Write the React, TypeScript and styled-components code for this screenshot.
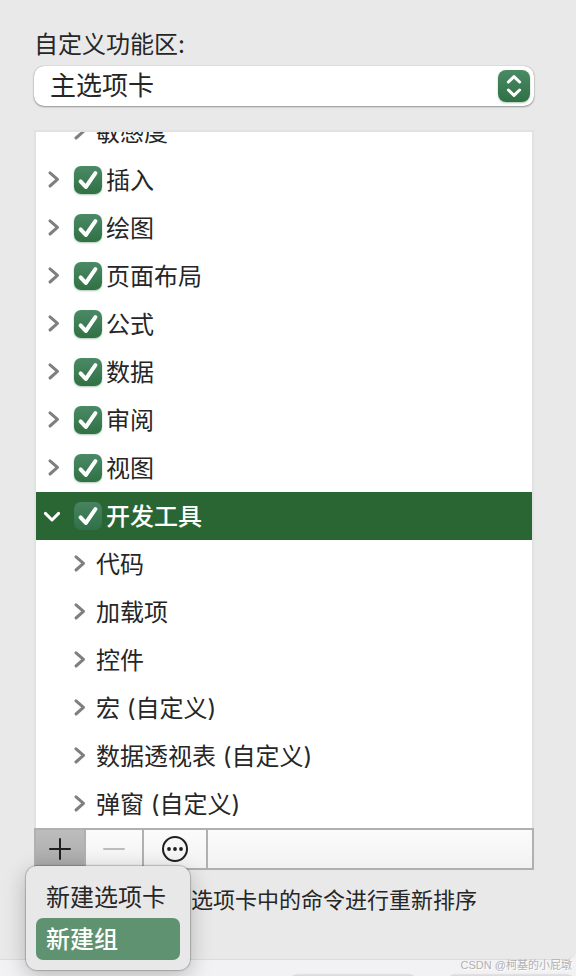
import React from "react";
import styled, { createGlobalStyle } from "styled-components";

const GlobalStyle = createGlobalStyle`
  *, *::before, *::after { box-sizing: border-box; }
  body { margin: 0; background: #f2f2f4; }
  body, button, select, input {
    font-family: Inter, "Noto Sans CJK SC", sans-serif;
    color: #262626;
  }
`;

const green = "linear-gradient(#4a8b66, #2f7044)";

const Page = styled.div`
  position: relative;
  display: flex;
  flex-direction: column;
  height: 100vh;
  overflow: hidden;
`;

const Panel = styled.main`
  flex: 1;
  min-height: 0;
  display: flex;
  flex-direction: column;
  padding: 29px 42px 0 34px;
  background: #e9e9e9;
  border-bottom: 1px solid #dcdcdc;
  border-bottom-right-radius: 10px;
`;

const FieldLabel = styled.label`
  font-size: 24px;
  line-height: 32px;
`;

const SelectBox = styled.div`
  display: grid;
  align-items: center;
  margin: 5px 0 24px;
  > * { grid-area: 1 / 1; }
`;

const Select = styled.select`
  appearance: none;
  width: 100%;
  height: 40px;
  padding: 0 48px 0 16px;
  border: 0;
  border-radius: 10px;
  background: #fff;
  font-size: 26px;
  line-height: 40px;
  box-shadow: 0 0 1px rgba(0, 0, 0, 0.4), 0 1px 2px rgba(0, 0, 0, 0.35);
`;

const Stepper = styled.span`
  justify-self: end;
  display: flex;
  width: 32px;
  height: 32px;
  margin-right: 4px;
  border-radius: 8px;
  background: ${green};
  box-shadow: 0 1px 2px rgba(47, 112, 68, 0.4);
  pointer-events: none;
`;

const Tree = styled.ul`
  flex: 1;
  min-height: 0;
  display: flex;
  flex-direction: column;
  justify-content: flex-end;
  overflow: hidden;
  margin: 0;
  padding: 0;
  list-style: none;
  background: #fff;
  border: 2px solid #e2e2e2;
  border-bottom: 0;
`;

const Row = styled.li<{ $nested?: boolean; $selected?: boolean }>`
  flex: none;
  display: flex;
  align-items: center;
  height: 48px;
  padding-left: ${(p) => (p.$nested ? 32 : 6)}px;
  font-size: 24px;
  line-height: 32px;
  font-weight: ${(p) => (p.$selected ? 500 : 400)};
  color: ${(p) => (p.$selected ? "#fff" : "#262626")};
  background: ${(p) => (p.$selected ? "#2a6534" : "transparent")};
`;

const Disclosure = styled.button<{ $selected?: boolean }>`
  display: flex;
  padding: 0;
  border: 0;
  background: none;
  color: ${(p) => (p.$selected ? "#fff" : "#7f7f7f")};
`;

const RowText = styled.span`
  padding-top: 2px;
`;

const NestedText = styled(RowText)`
  margin-left: 8px;
`;

const CheckLabel = styled.label`
  display: flex;
  align-items: center;
  gap: 4px;
  margin-left: 12px;
`;

const CheckBox = styled.span`
  display: grid;
  > * { grid-area: 1 / 1; }
  svg { pointer-events: none; visibility: hidden; }
  input:checked + svg { visibility: visible; }
`;

const CheckInput = styled.input<{ $selected?: boolean }>`
  appearance: none;
  width: 28px;
  height: 28px;
  margin: 0;
  border-radius: 7px;
  background: ${(p) => (p.$selected ? "linear-gradient(#47845f, #2f7148)" : green)};
  box-shadow: ${(p) => (p.$selected ? "none" : "0 1px 2px rgba(47, 112, 68, 0.4)")};
`;

const Toolbar = styled.div`
  display: flex;
  height: 42px;
  border: 2px solid #b0b0b0;
  background: linear-gradient(#fbfbfb, #f2f2f2);
`;

const Tool = styled.div<{ $width: number }>`
  position: relative;
  width: ${(p) => p.$width}px;
  border-right: 2px solid #b0b0b0;
`;

const ToolButton = styled.button<{ $pressed?: boolean }>`
  display: flex;
  align-items: center;
  justify-content: center;
  width: 100%;
  height: 100%;
  padding: 0;
  border: 0;
  background: ${(p) => (p.$pressed ? "linear-gradient(#bdbdbd, #a9a9a9)" : "none")};
`;

const Menu = styled.div`
  position: absolute;
  z-index: 2;
  top: 36px;
  left: -10px;
  width: 164px;
  padding: 10px;
  border-radius: 11px;
  background: #e8e8e8;
  box-shadow: 0 0 1px 1px rgba(0, 0, 0, 0.2), 0 6px 22px rgba(0, 0, 0, 0.24);
`;

const MenuItem = styled.button<{ $active?: boolean }>`
  display: block;
  width: 100%;
  height: 42px;
  padding: 2px 0 0 10px;
  border: 0;
  border-radius: 7px;
  text-align: left;
  white-space: nowrap;
  font-size: 24px;
  line-height: 40px;
  font-weight: ${(p) => (p.$active ? 500 : 400)};
  background: ${(p) => (p.$active ? "#5e9270" : "none")};
  color: ${(p) => (p.$active ? "#fff" : "#262626")};
`;

const Hint = styled.p`
  margin: 0;
  padding: 14px 0 43px 157px;
  font-size: 22px;
  line-height: 32px;
  white-space: nowrap;
`;

const Footer = styled.footer`
  flex: none;
  display: flex;
  justify-content: flex-end;
  gap: 28px;
  height: 16px;
  padding-top: 15px;
  overflow: hidden;
`;

const FooterEdge = styled.span`
  flex: none;
  width: 130px;
  height: 40px;
  border-radius: 10px;
  background: #dcdcde;
  box-shadow: 0 0 2px rgba(0, 0, 0, 0.25);
`;

const Watermark = styled.span`
  position: absolute;
  z-index: 3;
  right: 4px;
  bottom: 3px;
  font-family: "Liberation Sans", "Noto Sans CJK SC", sans-serif;
  font-size: 11px;
  line-height: 16px;
  color: #b0b0b2;
  text-shadow: 1px 1px 0 #fff;
`;

function Chevron({ open }: { open?: boolean }) {
  return (
    <svg width="20" height="24" viewBox="0 0 20 24" fill="none" stroke="currentColor"
      strokeWidth="3" strokeLinecap="round" strokeLinejoin="round" aria-hidden="true">
      <path d={open ? "M3.4 9.4 10 16l6.6-6.6" : "M8 4.8 15.5 11.4 8 18"} />
    </svg>
  );
}

function TabRow({ name, selected }: { name: string; selected?: boolean }) {
  return (
    <Row $selected={selected}>
      <Disclosure type="button" $selected={selected} aria-label={name} aria-expanded={!!selected}>
        <Chevron open={selected} />
      </Disclosure>
      <CheckLabel>
        <CheckBox>
          <CheckInput type="checkbox" defaultChecked $selected={selected} />
          <svg width="28" height="28" viewBox="0 0 28 28" fill="none" stroke="#fff"
            strokeWidth="4" strokeLinecap="round" strokeLinejoin="round" aria-hidden="true">
            <path d="M6.6 15.4 11.8 21 21.4 7.2" />
          </svg>
        </CheckBox>
        <RowText>{name}</RowText>
      </CheckLabel>
    </Row>
  );
}

function GroupRow({ name }: { name: string }) {
  return (
    <Row $nested>
      <Disclosure type="button" aria-label={name} aria-expanded={false}>
        <Chevron />
      </Disclosure>
      <NestedText>{name}</NestedText>
    </Row>
  );
}

const tabs = ["插入", "绘图", "页面布局", "公式", "数据", "审阅", "视图"];
const groups = ["代码", "加载项", "控件", "宏 (自定义)", "数据透视表 (自定义)", "弹窗 (自定义)"];

export default function App() {
  return (
    <Page>
      <GlobalStyle />
      <Panel>
        <FieldLabel htmlFor="ribbon">自定义功能区:</FieldLabel>
        <SelectBox>
          <Select id="ribbon" defaultValue="main">
            <option value="main">主选项卡</option>
          </Select>
          <Stepper>
            <svg width="32" height="32" viewBox="0 0 32 32" fill="none" stroke="#fff"
              strokeWidth="3" strokeLinecap="round" strokeLinejoin="round" aria-hidden="true">
              <path d="M10.4 12 16 6.6 21.6 12M10.4 20 16 25.4 21.6 20" />
            </svg>
          </Stepper>
        </SelectBox>
        <Tree>
          <GroupRow name="敏感度" />
          {tabs.map((t) => <TabRow key={t} name={t} />)}
          <TabRow name="开发工具" selected />
          {groups.map((g) => <GroupRow key={g} name={g} />)}
        </Tree>
        <Toolbar>
          <Tool $width={50}>
            <ToolButton type="button" $pressed aria-label="添加" aria-expanded="true">
              <svg width="24" height="24" viewBox="0 0 24 24" stroke="#1f1f1f" strokeWidth="2" strokeLinecap="round" aria-hidden="true">
                <path d="M2 12h20M12 2v20" />
              </svg>
            </ToolButton>
            <Menu>
              <MenuItem type="button">新建选项卡</MenuItem>
              <MenuItem type="button" $active>新建组</MenuItem>
            </Menu>
          </Tool>
          <Tool $width={58}>
            <ToolButton type="button" disabled aria-label="删除">
              <svg width="24" height="24" viewBox="0 0 24 24" stroke="#bcbcbc" strokeWidth="2" strokeLinecap="round" aria-hidden="true">
                <path d="M2 12h20" />
              </svg>
            </ToolButton>
          </Tool>
          <Tool $width={64}>
            <ToolButton type="button" aria-label="更多">
              <svg width="28" height="28" viewBox="0 0 28 28" fill="#1f1f1f" aria-hidden="true">
                <circle cx="14" cy="14" r="12" fill="none" stroke="#1f1f1f" strokeWidth="2" />
                <circle cx="8" cy="14" r="1.9" />
                <circle cx="14" cy="14" r="1.9" />
                <circle cx="20" cy="14" r="1.9" />
              </svg>
            </ToolButton>
          </Tool>
        </Toolbar>
        <Hint>选项卡中的命令进行重新排序</Hint>
      </Panel>
      <Footer>
        <FooterEdge />
        <FooterEdge />
      </Footer>
      <Watermark>CSDN @柯基的小屁墩</Watermark>
    </Page>
  );
}
